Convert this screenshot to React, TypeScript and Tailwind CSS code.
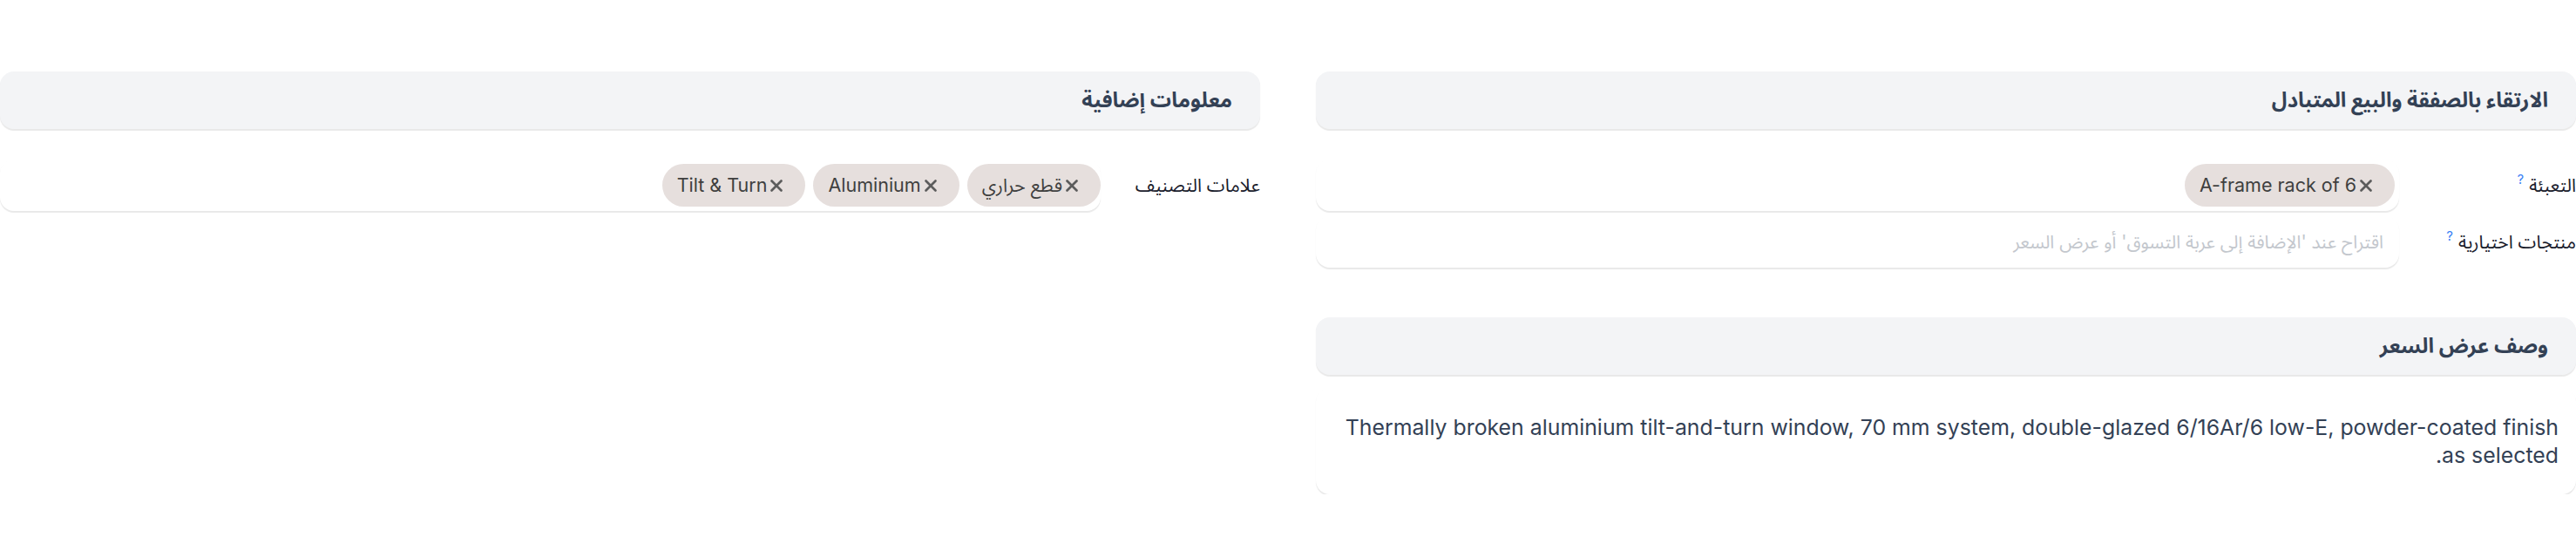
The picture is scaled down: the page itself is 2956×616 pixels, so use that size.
import { X } from "lucide-react";

function Help() {
  return <sup className="text-[15px] text-[#3b82f6] font-normal ms-[6px] -top-[0.6em] relative align-baseline">?</sup>;
}

function Chip({ label }: { label: string }) {
  return (
    <span dir="ltr" className="inline-flex items-center h-[49px] rounded-full bg-[#e6dfdd] pl-[17px] pr-[22px] text-[21.5px] text-[#3f3f3f]">
      <span>{label}</span>
      <X size={22} strokeWidth={2.9} className="text-[#5c5c5c] shrink-0" />
    </span>
  );
}

function SectionHeader({ title }: { title: string }) {
  return (
    <div className="h-[66px] flex items-center px-8 rounded-2xl bg-[#f3f4f6] shadow-[0_1.5px_1px_rgba(0,0,0,0.09)]">
      <h2 className="text-[24px] font-bold text-[#334155]">{title}</h2>
    </div>
  );
}

const fieldBox = "bg-white rounded-2xl shadow-[0_1.5px_1px_rgba(0,0,0,0.09)]";

export default function App() {
  return (
    <div dir="rtl" className="w-[2956px] pt-[82px] grid grid-cols-2 gap-16 items-start font-['Inter','Noto_Sans_Arabic','Noto_Sans',sans-serif] bg-white">
      {/* upsell / cross-sell */}
      <div>
        <SectionHeader title="الارتقاء بالصفقة والبيع المتبادل" />

        <div className="mt-[35px] flex items-center">
          <label className="w-[203px] shrink-0 text-[21px] text-[#1a202c]">
            التعبئة
            <Help />
          </label>
          <div className={`flex-1 h-[59px] flex items-end gap-2 p-[5px] ${fieldBox}`}>
            <Chip label="A-frame rack of 6" />
          </div>
        </div>

        <div className="mt-[6px] flex items-center">
          <label className="w-[203px] shrink-0 text-[21px] text-[#1a202c]">
            منتجات اختيارية
            <Help />
          </label>
          <div className={`flex-1 h-[59px] flex items-center px-[18px] ${fieldBox}`}>
            <input
              className="w-full bg-transparent outline-none text-[20.8px] text-[#1f2937] placeholder:text-[#c3c7cd]"
              placeholder="اقتراح عند 'الإضافة إلى عربة التسوق' أو عرض السعر"
            />
          </div>
        </div>

        <div className="mt-[57px]">
          <SectionHeader title="وصف عرض السعر" />
        </div>
        <div className={`mt-[15px] pt-[29px] pb-[29px] pe-4 ps-5 ${fieldBox}`}>
          <p className="text-[24.85px] leading-[32px] text-[#334155]">
            Thermally broken aluminium tilt-and-turn window, 70 mm system, double-glazed 6/16Ar/6 low-E, powder-coated finish as selected.
          </p>
        </div>
      </div>

      {/* additional info */}
      <div>
        <SectionHeader title="معلومات إضافية" />
        <div className="mt-[35px] flex items-center">
          <label className="w-[183px] shrink-0 text-[21px] text-[#1a202c]">علامات التصنيف</label>
          <div className={`flex-1 h-[59px] flex items-end gap-[9px] p-[5px] ps-0 ${fieldBox}`}>
            <Chip label="قطع حراري" />
            <Chip label="Aluminium" />
            <Chip label="Tilt & Turn" />
          </div>
        </div>
      </div>
    </div>
  );
}
